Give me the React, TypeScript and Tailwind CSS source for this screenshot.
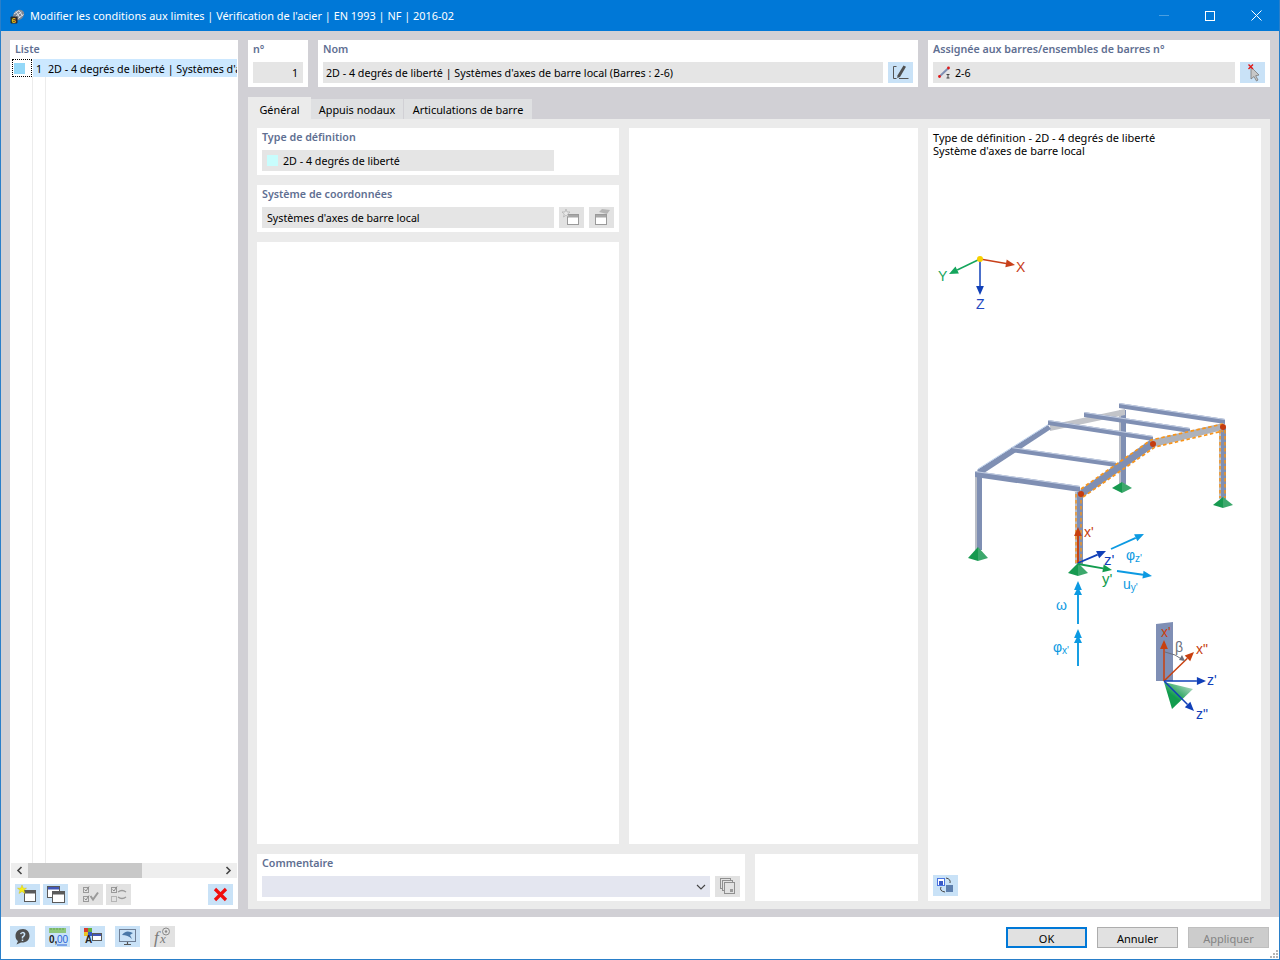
import type { ReactNode } from 'react';

const font = { fontFamily: '"Noto Sans", sans-serif' };

function IconButton({ children, muted, className }: { children: ReactNode; muted?: boolean; className?: string }) {
  return (
    <div className={`flex h-[21px] w-[25px] shrink-0 items-center justify-center ${muted ? 'bg-[#e2e2e2]' : 'bg-[#c9e2f7]'} ${className ?? ''}`}>
      <svg width="25" height="21" viewBox="0 0 25 21">
        {children}
      </svg>
    </div>
  );
}

function Win({ x, y, w = 11, h = 11, stroke = '#5a5a5a', head = '#5a5a5a' }: { x: number; y: number; w?: number; h?: number; stroke?: string; head?: string }) {
  return (
    <g>
      <rect x={x + 0.5} y={y + 0.5} width={w} height={h} fill="#fff" stroke={stroke} />
      <rect x={x + 1} y={y + 1} width={w - 1} height={2.5} fill={head} />
    </g>
  );
}

function Label({ children }: { children: ReactNode }) {
  return <div className="h-[22px] pt-[1px] text-[10.7px] font-semibold leading-[16px] text-[#5f6f92]">{children}</div>;
}

function Field({ children, className }: { children?: ReactNode; className?: string }) {
  return <div className={`flex h-[21px] items-center bg-[#e5e5e5] pt-px text-[10.7px] leading-[14px] text-black ${className ?? ''}`}>{children}</div>;
}

function Arrow({ x1, y1, x2, y2, color, w = 1.9, size = 6.5 }: { x1: number; y1: number; x2: number; y2: number; color: string; w?: number; size?: number }) {
  const a = Math.atan2(y2 - y1, x2 - x1);
  const bx = x2 - Math.cos(a) * size * 1.4;
  const by = y2 - Math.sin(a) * size * 1.4;
  const px = -Math.sin(a) * size * 0.6;
  const py = Math.cos(a) * size * 0.6;
  return (
    <g>
      <line x1={x1} y1={y1} x2={bx} y2={by} stroke={color} strokeWidth={w} />
      <polygon points={`${x2},${y2} ${bx + px},${by + py} ${bx - px},${by - py}`} fill={color} />
    </g>
  );
}

function Support({ x, y, w = 10, h = 11, b = 3 }: { x: number; y: number; w?: number; h?: number; b?: number }) {
  return (
    <g>
      <polygon points={`${x},${y} ${x - w},${y + h} ${x},${y + h + b}`} fill="#179a50" />
      <polygon points={`${x},${y} ${x + w},${y + h} ${x},${y + h + b}`} fill="#3ca86c" />
    </g>
  );
}

function Beam({ a, b, t = 5 }: { a: [number, number]; b: [number, number]; t?: number }) {
  return (
    <g>
      <polygon points={`${a[0]},${a[1]} ${b[0]},${b[1]} ${b[0]},${b[1] + t} ${a[0]},${a[1] + t}`} fill="#7f8fb3" />
      <line x1={a[0]} y1={a[1] + 0.5} x2={b[0]} y2={b[1] + 0.5} stroke="#c4cfe4" strokeWidth="1" />
    </g>
  );
}

function Column({ x, y1, y2, w = 7 }: { x: number; y1: number; y2: number; w?: number }) {
  return (
    <g>
      <rect x={x} y={y1} width={w} height={y2 - y1} fill="#7f8fb3" />
      <rect x={x} y={y1} width={2} height={y2 - y1} fill="#b9bdc6" />
    </g>
  );
}

function Diagram() {
  const blue = '#0c9ae2';
  const red = '#c8400f';
  const dark = '#1140b8';
  const green = '#129c4e';
  const orange = '#f7941a';
  const txt = { fontFamily: '"Liberation Sans", sans-serif' };
  return (
    <svg className="mt-[93px] block shrink-0" width="333" height="480" viewBox="928 250 333 480" style={txt}>
      <defs>
        <linearGradient id="sup" x1="1" y1="0" x2="0.2" y2="1">
          <stop offset="0" stopColor="#d5e8dc" />
          <stop offset="0.65" stopColor="#129c4e" />
        </linearGradient>
      </defs>

      {/* axes */}
      <Arrow x1={980} y1={259} x2={1015} y2={265} color="#c8401a" w={1.5} />
      <Arrow x1={980} y1={259} x2={949} y2={274} color="#14a55c" w={1.5} />
      <Arrow x1={980} y1={259} x2={980} y2={295} color="#1140b8" w={1.5} />
      <circle cx={980} cy={259} r={3} fill="#f7d000" />
      <text x={1016} y={272} fontSize="14" fill="#c8401a">X</text>
      <text x={938} y={281} fontSize="14" fill="#14a55c">Y</text>
      <text x={976} y={309} fontSize="14" fill="#2348c0">Z</text>

      {/* frame, back to front */}
      <Column x={1119} y1={410} y2={484} />
      <Support x={1122} y={482} w={10} h={6} b={5} />
      <polygon points="1050,425 1125,409 1125,415 1050,431" fill="#c2c4c9" />
      <polygon points="977,470 1048,425 1051,429 981,475" fill="#7f8fb3" />
      <line x1={978} y1={469} x2={1049} y2={424} stroke="#bcd0ea" strokeWidth="1" />
      <Beam a={[1119, 403]} b={[1225, 419]} />
      <Beam a={[1084, 412]} b={[1190, 428]} />
      <Beam a={[1048, 420]} b={[1153, 436]} />
      <Column x={1219} y1={427} y2={499} />
      <Support x={1223} y={497} w={10} h={8} b={3} />
      <Beam a={[1011, 447]} b={[1116, 462]} />

      <polygon points="1080,490 1150,440 1154,447 1083,497" fill="#7f8fb3" />
      <polygon points="1150,440 1223,423 1223,430 1154,447" fill="#aeb2bb" />
      <polyline points="1081,489 1151,440 1223,424" fill="none" stroke={orange} strokeWidth="1.7" strokeDasharray="3.5 2.5" />
      <polyline points="1083,497 1155,447 1223,431" fill="none" stroke={orange} strokeWidth="1.7" strokeDasharray="3.5 2.5" />
      <line x1={1220} y1={430} x2={1220} y2={498} stroke={orange} strokeWidth="1.5" strokeDasharray="3.5 2.5" />
      <line x1={1225} y1={430} x2={1225} y2={498} stroke={orange} strokeWidth="1.5" strokeDasharray="3.5 2.5" />

      <Column x={975} y1={473} y2={550} />
      <Support x={978} y={547} w={10} h={11} b={3} />
      <Beam a={[975, 471]} b={[1080, 486]} t={6} />
      <Column x={1075} y1={492} y2={564} w={8} />
      <line x1={1076} y1={494} x2={1076} y2={563} stroke={orange} strokeWidth="1.4" strokeDasharray="3.5 2.5" />
      <line x1={1081} y1={494} x2={1081} y2={563} stroke={orange} strokeWidth="1.4" strokeDasharray="3.5 2.5" />
      <Support x={1078} y={563} w={10} h={10} b={3} />
      <circle cx={1081} cy={494} r={3} fill="#c43c10" />
      <circle cx={1153} cy={444} r={3} fill="#c43c10" />
      <circle cx={1223} cy={427} r={3} fill="#c43c10" />

      {/* local axes at the column foot */}
      <Arrow x1={1078} y1={563} x2={1078} y2={527} color={red} />
      <Arrow x1={1078} y1={563} x2={1106} y2={551} color={dark} />
      <Arrow x1={1078} y1={564} x2={1112} y2={570} color={green} />
      <text x={1084} y={537} fontSize="14" fill={red}>x'</text>
      <text x={1104} y={565} fontSize="15" fill={dark}>z'</text>
      <text x={1102} y={584} fontSize="15" fill={green}>y'</text>

      <Arrow x1={1111} y1={549} x2={1144} y2={534} color={blue} />
      <Arrow x1={1117} y1={571} x2={1152} y2={576} color={blue} />
      <text x={1126} y={560} fontSize="14" fill={blue}>φ<tspan fontSize="10" dy="2">z'</tspan></text>
      <text x={1123} y={589} fontSize="14" fill={blue}>u<tspan fontSize="10" dy="2">y'</tspan></text>

      <Arrow x1={1078} y1={624} x2={1078} y2={581} color={blue} />
      <polygon points="1078,587 1074,595 1082,595" fill={blue} />
      <text x={1056} y={610} fontSize="14" fill={blue}>ω</text>
      <Arrow x1={1078} y1={666} x2={1078} y2={629} color={blue} />
      <polygon points="1078,635 1074,643 1082,643" fill={blue} />
      <text x={1053} y={652} fontSize="14" fill={blue}>φ<tspan fontSize="10" dy="2">x'</tspan></text>

      {/* beta rotation detail */}
      <polygon points="1156,624 1173,622 1173,681 1156,681" fill="#7f8fb5" />
      <polygon points="1164,682 1193,689 1172,709" fill="url(#sup)" />
      <Arrow x1={1164} y1={681} x2={1164} y2={640} color={red} w={1.5} />
      <Arrow x1={1164} y1={681} x2={1194} y2={652} color={red} w={1.5} />
      <Arrow x1={1164} y1={681} x2={1206} y2={681} color={dark} w={1.5} />
      <Arrow x1={1164} y1={681} x2={1194} y2={711} color={dark} w={1.5} />
      <path d="M1165 652 Q1176 654 1183 660" fill="none" stroke="#6b6f7c" strokeWidth="1" />
      <polygon points="1185,661 1179,660 1182,655" fill="#6b6f7c" />
      <text x={1161} y={637} fontSize="14" fill={red}>x'</text>
      <text x={1196} y={654} fontSize="14" fill={red}>x"</text>
      <text x={1207} y={685} fontSize="14" fill={dark}>z'</text>
      <text x={1196} y={719} fontSize="14" fill={dark}>z"</text>
      <text x={1175} y={652} fontSize="14" fill="#6b6f7c">β</text>
    </svg>
  );
}

export default function App() {
  return (
    <div className="flex h-[960px] w-[1280px] flex-col overflow-hidden border-x border-b border-[#2a7fc9] bg-white" style={font}>
      {/* title bar */}
      <div className="flex h-[31px] shrink-0 items-center bg-[#0078d7] text-white">
        <svg className="ml-[8px]" width="16" height="16" viewBox="0 0 16 16">
          <ellipse cx="9.5" cy="7" rx="6" ry="4.8" transform="rotate(-35 9.5 7)" fill="#7d8694" />
          <path d="M5 6 L10 2.5 M6.5 8.5 L12.5 4 M9 10.5 L14.5 6.5 M7 3.5 L11 10 M10 2.5 L13.5 8" stroke="#e4e8ee" strokeWidth="0.9" />
          <rect x="1.5" y="8.5" width="7" height="7" rx="1" fill="#2a2a2a" />
          <text x="2.6" y="14.8" fontSize="8" fontWeight="bold" fill="#f5c015" fontFamily="Liberation Sans, sans-serif">6</text>
        </svg>
        <div className="ml-[5px] text-[10.9px] leading-[32px]">Modifier les conditions aux limites | Vérification de l'acier | EN 1993 | NF | 2016-02</div>
        <div className="ml-auto flex items-center">
          <div className="flex h-[31px] w-[46px] items-center justify-center">
            <div className="h-px w-[10px] bg-[#4a9fe0]" />
          </div>
          <div className="flex h-[31px] w-[46px] items-center justify-center">
            <div className="h-[10px] w-[10px] border border-white" />
          </div>
          <div className="flex h-[31px] w-[46px] items-center justify-center">
            <svg width="11" height="11" viewBox="0 0 11 11">
              <path d="M0.5 0.5 L10.5 10.5 M10.5 0.5 L0.5 10.5" stroke="#fff" strokeWidth="1" />
            </svg>
          </div>
        </div>
      </div>

      {/* body */}
      <div className="flex min-h-0 flex-1 gap-[10px] bg-[#d1d0d5] pb-[8px] pl-[9px] pr-[9px] pt-[9px]">
        {/* list */}
        <div className="flex w-[228px] shrink-0 flex-col bg-white">
          <div className="h-[19px] pl-[5px] text-[10.7px] font-semibold leading-[18px] text-[#5f6f92]">Liste</div>
          <div className="flex h-[18px] shrink-0 items-center pl-[2px] pr-px">
            <div className="flex h-[18px] w-[20px] shrink-0 items-center border border-dotted border-black pl-px">
              <div className="h-[11px] w-[11px] bg-[#94d8f8]" />
            </div>
            <div className="ml-px flex h-[18px] min-w-0 flex-1 items-center overflow-hidden whitespace-nowrap bg-[#cce8ff] pt-[2px] text-[10.7px] text-black">
              <span className="w-[9px] shrink-0 text-right">1</span>
              <span className="ml-[6px]">2D - 4 degrés de liberté | Systèmes d'axes de barre local</span>
            </div>
          </div>
          <div className="flex min-h-0 flex-1">
            <div className="w-[23px] border-r border-[#ececec]" />
            <div className="w-[13px] border-r border-[#ececec]" />
          </div>
          <div className="mx-px flex h-[15px] shrink-0 items-center bg-[#eeeeee]">
            <div className="flex w-[17px] justify-center">
              <svg width="7" height="9" viewBox="0 0 7 9"><path d="M5.5 1 L2 4.5 L5.5 8" fill="none" stroke="#444" strokeWidth="1.6" /></svg>
            </div>
            <div className="h-[15px] w-[114px] bg-[#c8c8c8]" />
            <div className="ml-auto flex w-[17px] justify-center">
              <svg width="7" height="9" viewBox="0 0 7 9"><path d="M1.5 1 L5 4.5 L1.5 8" fill="none" stroke="#444" strokeWidth="1.6" /></svg>
            </div>
          </div>
          <div className="flex h-[27px] shrink-0 items-start pl-[5px] pr-[5px] pt-[6px]">
            <IconButton>
              <Win x={9} y={6} />
              <path d="M7 1 L8.3 4.2 L11.5 4.2 L9 6.2 L10 9.5 L7 7.5 L4 9.5 L5 6.2 L2.5 4.2 L5.7 4.2 Z" fill="#f7ee1c" stroke="#c9b800" strokeWidth="0.4" />
            </IconButton>
            <IconButton className="ml-[3px]">
              <Win x={4} y={2} w={12} h={11} head="#4056b8" />
              <Win x={9} y={7} w={12} h={11} />
            </IconButton>
            <IconButton muted className="ml-[10px]">
              <rect x="5.5" y="3.5" width="5" height="5" fill="none" stroke="#9a9a9a" />
              <rect x="5.5" y="12.5" width="5" height="5" fill="none" stroke="#9a9a9a" />
              <path d="M6.5 5.5 L8 7 L11 2.5 M6.5 14.5 L8 16 L11 11.5" fill="none" stroke="#8a8a8a" />
              <path d="M12.5 12 L15 15.5 L20 8.5" fill="none" stroke="#9a9a9a" strokeWidth="2" />
            </IconButton>
            <IconButton muted className="ml-[3px]">
              <rect x="5.5" y="3.5" width="5" height="5" fill="none" stroke="#9a9a9a" />
              <rect x="5.5" y="12.5" width="5" height="5" fill="none" stroke="#b5b5b5" />
              <path d="M6.5 5.5 L8 7 L11 2.5" fill="none" stroke="#8a8a8a" />
              <path d="M12 8 Q16 5 20 8 M20 13 Q16 16 12 13" fill="none" stroke="#9a9a9a" strokeWidth="1.3" />
            </IconButton>
            <IconButton className="ml-auto">
              <path d="M7 5 L18 16 M18 5 L7 16" stroke="#f00d0d" strokeWidth="3.2" />
            </IconButton>
          </div>
          <div className="h-[4px] shrink-0" />
        </div>

        {/* right side */}
        <div className="flex min-w-0 flex-1 flex-col">
          <div className="flex h-[47px] shrink-0 gap-[10px]">
            <div className="w-[60px] bg-white px-[5px]">
              <Label>n°</Label>
              <Field className="justify-end pr-[5px]">1</Field>
            </div>
            <div className="w-[600px] bg-white px-[5px]">
              <Label>Nom</Label>
              <div className="flex gap-[5px]">
                <Field className="flex-1 pl-[3px]">2D - 4 degrés de liberté | Systèmes d'axes de barre local (Barres : 2-6)</Field>
                <IconButton>
                  <path d="M8.5 4.5 H5.5 V16.5 H8.5 M11 16.5 H20.5" fill="none" stroke="#555" strokeWidth="1" />
                  <path d="M15.5 3.5 L18 4.8 L12 15 L9.2 16 L9.6 13.2 Z" fill="#505050" />
                </IconButton>
              </div>
            </div>
            <div className="flex-1 bg-white px-[5px]">
              <Label>Assignée aux barres/ensembles de barres n°</Label>
              <div className="flex gap-[5px]">
                <Field className="flex-1 pl-[5px]">
                  <svg width="13" height="13" viewBox="0 0 13 13" className="-mt-px">
                    <path d="M1.5 10.5 L10.5 2" stroke="#7f8fb3" strokeWidth="2" />
                    <circle cx="1.5" cy="10.5" r="1.4" fill="#e01818" />
                    <circle cx="10.5" cy="2" r="1.4" fill="#e01818" />
                    <path d="M8.5 8.5 H11.5 M10 8.5 V12 M8.5 12 H11.5" stroke="#333" strokeWidth="0.9" fill="none" />
                  </svg>
                  <span className="ml-[4px]">2-6</span>
                </Field>
                <IconButton>
                  <path d="M11 5 L11 17 L14 14.5 L16.5 19 L18 18 L15.7 13.7 L19 13 Z" fill="#c7c7c7" stroke="#7a7a7a" strokeWidth="0.8" />
                  <path d="M8.5 2.5 L13 7 M13 2.5 L8.5 7" stroke="#e01818" strokeWidth="1.4" />
                </IconButton>
              </div>
            </div>
          </div>

          {/* tabs */}
          <div className="mt-[10px] flex h-[22px] shrink-0 items-end text-[10.9px] text-black">
            <div className="flex h-[22px] w-[63px] items-center justify-center bg-[#ebebeb] pt-[5px]">Général</div>
            <div className="flex h-[20px] w-[92px] items-center justify-center bg-[#dfe0e2] pt-[3px]">Appuis nodaux</div>
            <div className="ml-px flex h-[20px] w-[128px] items-center justify-center bg-[#dfe0e2] pt-[3px]">Articulations de barre</div>
          </div>

          <div className="flex min-h-0 flex-1 gap-[10px] bg-[#ebebeb] pb-[8px] pl-[9px] pr-[9px] pt-[9px]">
            <div className="flex w-[661px] shrink-0 flex-col gap-[10px]">
              <div className="flex min-h-0 flex-1 gap-[10px]">
                <div className="flex w-[362px] shrink-0 flex-col gap-[10px]">
                  <div className="h-[47px] shrink-0 bg-white px-[5px]">
                    <Label>Type de définition</Label>
                    <Field className="w-[292px] pl-[5px]">
                      <div className="-mt-px h-[11px] w-[11px] bg-[#c8fdfd]" />
                      <span className="ml-[5px]">2D - 4 degrés de liberté</span>
                    </Field>
                  </div>
                  <div className="h-[47px] shrink-0 bg-white px-[5px]">
                    <Label>Système de coordonnées</Label>
                    <div className="flex gap-[5px]">
                      <Field className="w-[292px] pl-[5px]">Systèmes d'axes de barre local</Field>
                      <IconButton muted>
                        <Win x={8} y={7} w={11} h={10} stroke="#9a9a9a" head="#a8a8a8" />
                        <path d="M7 2 L8 5 L11 5 L8.7 7 L9.5 10 L7 8.3 L4.5 10 L5.3 7 L3 5 L6 5 Z" fill="#e8e8e8" stroke="#a8a8a8" strokeWidth="0.6" />
                      </IconButton>
                      <IconButton muted>
                        <Win x={6} y={7} w={11} h={10} stroke="#9a9a9a" head="#a8a8a8" />
                        <path d="M10 5 L13 2 L21 3 L18 7 L14 6 Z" fill="#b5b5b5" />
                      </IconButton>
                    </div>
                  </div>
                  <div className="min-h-0 flex-1 bg-white" />
                </div>
                <div className="flex-1 bg-white" />
              </div>
              <div className="flex h-[47px] shrink-0 gap-[10px]">
                <div className="w-[488px] bg-white px-[5px]">
                  <Label>Commentaire</Label>
                  <div className="flex gap-[5px]">
                    <div className="flex h-[21px] flex-1 items-center justify-end bg-[#e4e6f0] pr-[4px]">
                      <svg width="10" height="6" viewBox="0 0 10 6"><path d="M1 1 L5 5 L9 1" fill="none" stroke="#444" strokeWidth="1.1" /></svg>
                    </div>
                    <IconButton muted>
                      <rect x="5.5" y="2.5" width="10" height="10" fill="none" stroke="#8f8f8f" />
                      <rect x="7.5" y="4.5" width="10" height="10" fill="#e2e2e2" stroke="#8f8f8f" />
                      <rect x="9.5" y="6.5" width="10" height="11" fill="#e2e2e2" stroke="#8f8f8f" />
                      <rect x="15" y="13" width="3" height="3" fill="#9a9a9a" />
                    </IconButton>
                  </div>
                </div>
                <div className="flex-1 bg-white" />
              </div>
            </div>

            {/* preview */}
            <div className="flex flex-1 flex-col bg-white">
              <div className="shrink-0 pl-[5px] pt-[3px] text-[11px] leading-[13px] text-black">
                <div>Type de définition - 2D - 4 degrés de liberté</div>
                <div>Système d'axes de barre local</div>
              </div>
              <Diagram />
              <div className="mt-auto pb-[5px] pl-[5px]">
                <IconButton>
                  <rect x="4.5" y="3.5" width="7" height="7" fill="#fff" stroke="#4a74e0" />
                  <rect x="6" y="6" width="4" height="4" fill="#3a5bc8" />
                  <rect x="13" y="10" width="7" height="7" fill="#5d7fae" />
                  <path d="M13 3 Q18 4 17 8 M12 17 Q6 16 8 12" fill="none" stroke="#444" />
                </IconButton>
              </div>
            </div>
          </div>
        </div>
      </div>

      {/* footer */}
      <div className="relative flex h-[42px] shrink-0 items-start pl-[9px] pr-[10px] pt-[10px]">
        <div className="-mt-px flex gap-[10px]">
          <IconButton>
            <path d="M13 3 C8 3 5.5 6 5.5 10 C5.5 12.5 6.5 14 8 15 L6.5 18.5 L11 16.5 C16 17 19.5 14 19.5 10 C19.5 6 17 3 13 3 Z" fill="#4f4f4f" />
            <path d="M10.5 8 Q12.5 5.5 14.5 7.5 Q15 9.5 12.5 11 V12.5 M12.5 13.5 V15" fill="none" stroke="#c9e2f7" strokeWidth="1.5" />
          </IconButton>
          <IconButton>
            <rect x="4" y="2" width="17" height="5" fill="#8ec77c" />
            <path d="M6 2v2 M9 2v2 M12 2v2 M15 2v2 M18 2v2" stroke="#5d9c4d" strokeWidth="0.8" />
            <text x="4" y="17" fontSize="10" fontWeight="bold" fill="#222" fontFamily="Liberation Sans, sans-serif">0,</text>
            <text x="12" y="17" fontSize="10" fill="#2a62d8" fontFamily="Liberation Sans, sans-serif">00</text>
            <path d="M12 19 H22" stroke="#2a62d8" />
          </IconButton>
          <IconButton>
            <rect x="4" y="2" width="4" height="4" fill="#d93b2b" />
            <rect x="8" y="2" width="4" height="4" fill="#62b040" />
            <rect x="4" y="6" width="4" height="4" fill="#e8c428" />
            <rect x="8" y="6" width="4" height="4" fill="#3658c8" />
            <text x="5" y="17" fontSize="10" fontWeight="bold" fill="#222" fontFamily="Liberation Sans, sans-serif">A</text>
            <rect x="12.5" y="7.5" width="9" height="7" fill="#fff" stroke="#5a5a5a" />
            <rect x="13" y="8" width="8" height="2" fill="#4056b8" />
          </IconButton>
          <IconButton>
            <rect x="4.5" y="3.5" width="16" height="12" fill="#c9e2f7" stroke="#6f7f96" />
            <path d="M7 9 Q11 3 18 7 L15 9 L17 13 Q13 9 7 9 Z" fill="#4a78a8" />
            <path d="M12.5 16 V18 M9 18.5 H16" stroke="#555" strokeWidth="1.2" />
          </IconButton>
          <IconButton muted>
            <text x="4" y="17" fontSize="17" fontStyle="italic" fill="#7a7a7a" fontFamily="Liberation Serif, serif">f</text>
            <text x="10" y="17" fontSize="13" fontStyle="italic" fill="#7a7a7a" fontFamily="Liberation Serif, serif">x</text>
            <circle cx="16" cy="5.5" r="3.5" fill="none" stroke="#8a8a8a" />
            <circle cx="16" cy="5.5" r="1.2" fill="#8a8a8a" />
          </IconButton>
        </div>
        <div className="ml-auto flex gap-[10px] text-[11px]">
          <div className="flex h-[21px] w-[81px] items-center justify-center border-2 border-[#0078d7] bg-[#e1e1e1] pt-[3px] text-black">OK</div>
          <div className="flex h-[21px] w-[81px] items-center justify-center border border-[#adadad] bg-[#e1e1e1] pt-[3px] text-black">Annuler</div>
          <div className="flex h-[21px] w-[81px] items-center justify-center border border-[#bfbfbf] bg-[#cccccc] pt-[3px] text-[#838383]">Appliquer</div>
        </div>
        <svg className="absolute bottom-0 right-0" width="10" height="10" viewBox="0 0 10 10">
          <path d="M7 1h2v2h-2z M4 4h2v2h-2z M7 4h2v2h-2z M1 7h2v2h-2z M4 7h2v2h-2z M7 7h2v2h-2z" fill="#b5b5b5" />
        </svg>
      </div>
    </div>
  );
}
